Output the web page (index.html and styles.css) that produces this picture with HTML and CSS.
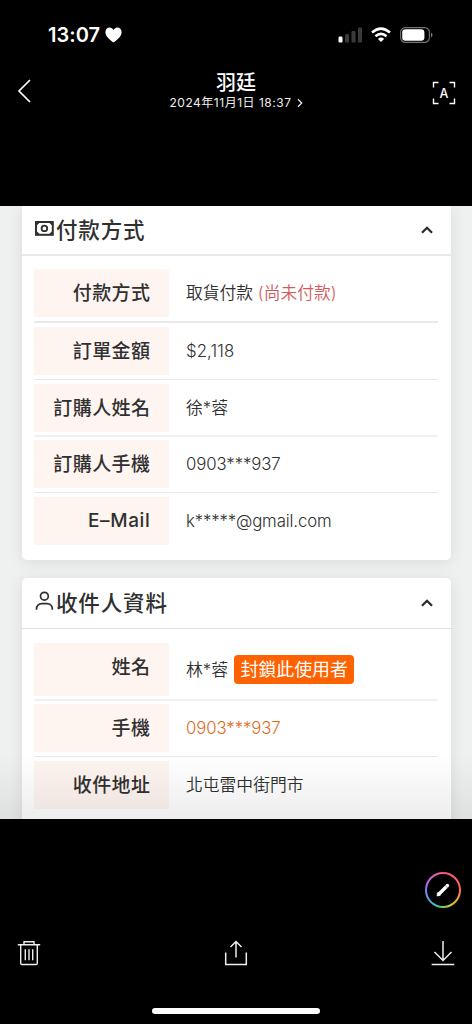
FILE: index.html
```html
<!DOCTYPE html>
<html lang="zh-Hant">
<head>
<meta charset="utf-8">
<meta name="viewport" content="width=device-width, initial-scale=1">
<title>羽廷</title>
<link rel="stylesheet" href="styles.css">
</head>
<body>
<div class="screen">
  <header class="status">
    <div class="clock"><span>13:07</span>
      <svg class="heart" width="17" height="16" viewBox="0 0 17 16"><path d="M8.5 15.5C5.8 13.6.4 9.8.4 5.3.4 2.5 2.3.6 4.6.6c1.7 0 3.1.9 3.9 2.5C9.300 1.500 10.700.6 12.400.6c2.300 0 4.200 1.900 4.200 4.700 0 4.500-5.400 8.300-8.100 10.200z" fill="#fff"/></svg>
    </div>
    <div class="indicators">
      <svg width="25" height="16" viewBox="0 0 25 16"><rect x=".5" y="9.500" width="4" height="6" rx="1.200" fill="#fff"/><g fill="#3a3a3a"><rect x="7" y="7" width="4" height="8.500" rx="1.200"/><rect x="13.500" y="4" width="4" height="11.500" rx="1.200"/><rect x="20" y=".5" width="4" height="15" rx="1.200"/></g></svg>
      <svg class="wifi" width="20" height="16" viewBox="0 0 20 16" fill="none" stroke="#fff" stroke-width="2.600"><path d="M1 5.600Q10-2.200 19 5.600M4.400 9.200q5.600-4.700 11.200 0"/><path d="M6.900 11.900Q10 9.300 13.100 11.900L10 15z" fill="#fff" stroke="none"/></svg>
      <svg class="battery" width="33" height="16" viewBox="0 0 33 16"><rect x=".6" y=".6" width="28.800" height="14.800" rx="4.800" fill="none" stroke="#747474" stroke-width="1.100"/><rect x="2.200" y="2.300" width="22.200" height="11.400" rx="3.300" fill="#fff"/><path d="M31 5.500c2 1 2 4 0 5z" fill="#777"/></svg>
    </div>
  </header>

  <nav class="topbar">
    <svg class="back" width="15" height="24" viewBox="0 0 15 24"><path d="M13 1 2 12l11 11" fill="none" stroke="#fff" stroke-width="1.700"/></svg>
    <div class="heading">
      <h1>羽廷</h1>
      <p><span>2024年11月1日 18:37</span><svg width="6" height="10" viewBox="0 0 6 10"><path d="M1 1.300 4.700 5 1 8.700" fill="none" stroke="#e8e8e8" stroke-width="1.300"/></svg></p>
    </div>
    <svg class="scan" width="24" height="24" viewBox="0 0 24 24"><path d="M1.500 6.500v-5h5M17.500 1.500h5v5M22.500 17.500v5h-5M6.500 22.500h-5v-5" fill="none" stroke="#fff" stroke-width="1.400"/><text x="12" y="16.500" text-anchor="middle" class="scan-letter">A</text></svg>
  </nav>

  <main class="photo">
    <section class="card card-payment">
      <div class="card-head">
        <svg class="cash" width="19" height="15" viewBox="0 0 19 15"><rect x="1" y="1" width="16.800" height="12.800" fill="none" stroke="#303030" stroke-width="2"/><path d="M1 1h4.300L1 5.300zM17.800 1h-4.300l4.300 4.300zM1 13.800h4.300L1 9.500zM17.800 13.800h-4.300l4.300-4.300z" fill="#303030"/><circle cx="9.400" cy="7.400" r="2.800" fill="none" stroke="#303030" stroke-width="1.800"/></svg>
        <h2>付款方式</h2>
        <svg class="chevron" width="12" height="8" viewBox="0 0 12 8"><path d="m1 6.700 5-4.900 5 4.900" fill="none" stroke="#2b2b2b" stroke-width="2.300"/></svg>
      </div>
      <div class="row line-strong"><div class="label">付款方式</div><div class="value">取貨付款 <span class="unpaid">(尚未付款)</span></div></div>
      <div class="row"><div class="label">訂單金額</div><div class="value money">$2,118</div></div>
      <div class="row line-soft"><div class="label">訂購人姓名</div><div class="value">徐*蓉</div></div>
      <div class="row"><div class="label">訂購人手機</div><div class="value phone">0903***937</div></div>
      <div class="row last"><div class="label latin">E–Mail</div><div class="value mail">k*****@gmail.com</div></div>
    </section>

    <section class="card card-recipient">
      <div class="card-head">
        <svg class="person" width="19" height="20" viewBox="0 0 19 20" fill="none" stroke="#303030" stroke-width="1.700"><circle cx="9.400" cy="5.200" r="3.900"/><path d="M1.500 18.800v-.8c0-3.200 2.300-5.400 5.200-5.400h5.400c2.900 0 5.200 2.200 5.200 5.400v.8"/></svg>
        <h2>收件人資料</h2>
        <svg class="chevron" width="12" height="8" viewBox="0 0 12 8"><path d="m1 6.700 5-4.900 5 4.900" fill="none" stroke="#2b2b2b" stroke-width="2.300"/></svg>
      </div>
      <div class="row tall line-soft"><div class="label">姓名</div><div class="value">林*蓉<button class="block-user">封鎖此使用者</button></div></div>
      <div class="row"><div class="label">手機</div><div class="value phone link">0903***937</div></div>
      <div class="row last"><div class="label">收件地址</div><div class="value">北屯雷中街門市</div></div>
    </section>
    <div class="shade"></div>
  </main>

  <footer class="tools">
    <div class="edit"><svg width="14" height="14" viewBox="0 0 14 14" stroke="#fff" stroke-linecap="round" fill="#fff"><path d="M3 11 11.500 2.500" stroke-width="3.400"/><path d="M1.500 10 .9 13.100l3.100-.8z" stroke-width=".6"/><path d="m9.200 2.500 2.300 2.300" stroke="#000" stroke-width=".4"/></svg></div>
    <div class="actions">
      <svg width="24" height="26" viewBox="0 0 24 26" fill="none" stroke="#eee" stroke-width="1.400"><path d="M.8 4.800h22.400M7 4.500V1.800h10v2.700M3.700 5v18.300q0 1.200 1.200 1.200h14.200q1.200 0 1.200-1.200V5M8.300 9.300v11M12 9.300v11M15.700 9.300v11"/></svg>
      <svg width="24" height="26" viewBox="0 0 24 26" fill="none" stroke="#eee" stroke-width="1.500"><path d="M1.700 12.500v12h20.600v-12M12 17.500V1.500M6.500 7 12 1.500 17.500 7"/></svg>
      <svg width="24" height="26" viewBox="0 0 24 26" fill="none" stroke="#eee" stroke-width="1.500"><path d="M.7 24.500h22.600M12 1v19.500M3.500 12 12 20.500 20.500 12"/></svg>
    </div>
    <div class="home"></div>
  </footer>
</div>
</body>
</html>
```
FILE: styles.css
```css
* { box-sizing: border-box; }
body { margin: 0; background: #000; }
h1, h2, p { margin: 0; }
svg { display: block; flex: none; }

.screen {
  width: 472px;
  height: 1024px;
  overflow: hidden;
  display: flex;
  flex-direction: column;
  background: #000;
  color: #fff;
  font-family: Inter, "Noto Sans CJK TC", sans-serif;
}

.status {
  height: 70px;
  padding: 0 39px 0 48px;
  display: flex;
  justify-content: space-between;
  align-items: center;
}
.clock { display: flex; align-items: center; gap: 5px; font-size: 20px; font-weight: 600; letter-spacing: .05px; }
.indicators { display: flex; align-items: center; }
.wifi { margin-left: 8px; }
.battery { margin-left: 9px; }

.topbar {
  height: 136px;
  padding: 0 16px 0 17px;
  display: flex;
  justify-content: space-between;
  align-items: flex-start;
}
.back { margin-top: 9px; }
.heading { margin-left: 8px; text-align: center; }
.heading h1 { font-size: 20px; line-height: 26px; font-weight: 500; }
.heading p { display: flex; align-items: center; gap: 5px; font-size: 12px; line-height: 13px; letter-spacing: .52px; color: #eee; white-space: nowrap; }
.scan { margin-top: 11px; }
.scan-letter { font: 500 12.500px Inter, sans-serif; fill: #fff; }

.photo {
  position: relative;
  height: 613px;
  padding: 0 21.500px;
  overflow: hidden;
  background: #eff1f0;
  color: #303030;
}
.card { background: #fff; box-shadow: 0 2px 15px rgba(0, 0, 0, .09); }
.card-payment { height: 354px; border-radius: 2px 2px 5px 5px; }
.card-recipient { height: 260px; margin-top: 18px; border-radius: 5px; }
.card-head {
  height: 50px;
  padding: 0 18px 0 13.500px;
  display: flex;
  align-items: center;
  border-bottom: 2px solid #e9e9ea;
  margin-bottom: 13px;
}
.card-recipient .card-head { height: 51px; border-bottom-width: 1px; border-color: #dfdfdf; margin-bottom: 14px; }
.cash, .person { margin-bottom: 4px; }
.card-head h2 { margin-left: 2px; font-size: 21.500px; line-height: 30px; font-weight: 500; letter-spacing: .85px; }
.chevron { margin-left: auto; }

.row {
  margin: 0 12.500px;
  padding-bottom: 4px;
  margin-bottom: 4px;
  display: flex;
  border-bottom: 1px solid #e9e9e9;
}
.line-strong { border-bottom: 2px solid #e9e9ea; }
.line-soft { padding-bottom: 3px; margin-bottom: 3px; border-bottom: 2px solid #f1f1f1; }
.last { border: 0; }
.label {
  width: 135px;
  height: 48px;
  padding-right: 18.500px;
  background: #fef4f0;
  text-align: right;
  font-size: 19px;
  line-height: 49px;
  font-weight: 500;
  letter-spacing: .45px;
  white-space: nowrap;
}
.latin { font-weight: 550; line-height: 47px; letter-spacing: .65px; }
.value {
  padding-left: 17px;
  display: flex;
  align-items: center;
  font-size: 16.800px;
  line-height: 48px;
  white-space: pre;
  font-weight: 360;
}
.line-strong .value { padding-top: 1px; line-height: 47px; }
.money { letter-spacing: .1px; }
.phone, .mail { letter-spacing: -.12px; }
.unpaid { color: #d35a5c; }
.link { color: #de6b23; }
.tall .label { height: 53px; }
.block-user {
  height: 29px;
  margin-left: 6px;
  padding: 0 6.500px 2px;
  border: 0;
  border-radius: 4px;
  background: #ff6200;
  color: #fff;
  font: 400 17.900px/27px "Noto Sans CJK TC", sans-serif;
}
.shade {
  position: absolute;
  inset: auto 0 0;
  height: 65px;
  background: linear-gradient(transparent, rgba(0, 0, 0, .07));
}

.tools { flex: 1; display: flex; flex-direction: column; }
.edit {
  width: 36px;
  height: 36px;
  margin: 53px 11px 0 auto;
  display: grid;
  place-items: center;
  border: 2px solid transparent;
  border-radius: 50%;
  background: linear-gradient(#000, #000) padding-box, conic-gradient(#f9577b, #ff6557 22%, #fca036 33%, #c5d42e 44%, #48c584 54%, #4da5ee 64%, #7b83f5 72%, #ba64e8 83%, #f9577b) border-box;
}
.actions { display: flex; justify-content: space-between; padding: 0 17px; margin-top: 32px; }
.home { width: 168px; height: 6px; margin: 42px auto 0; border-radius: 3px; background: #fff; }
```
